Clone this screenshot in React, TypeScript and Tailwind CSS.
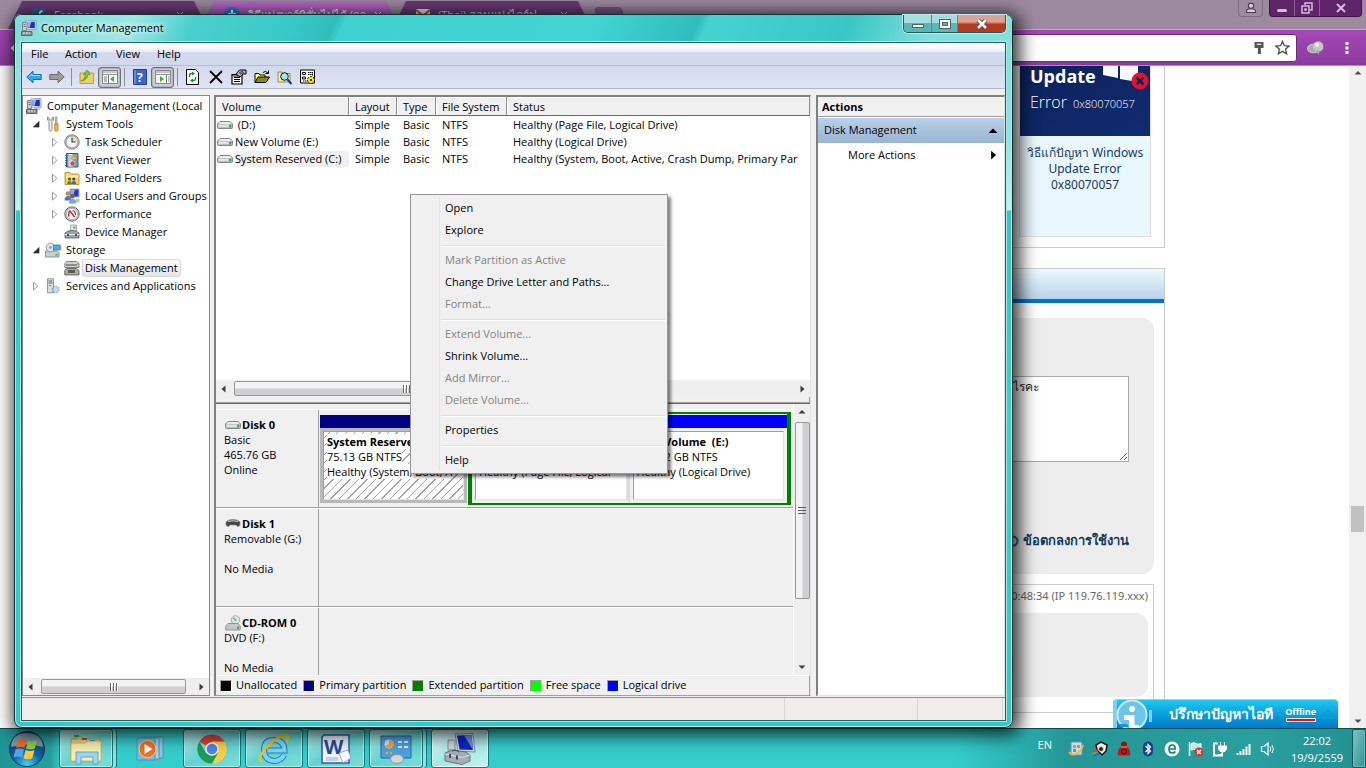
import React from "react";

// --- DATA ---
const TREE = [
  { label: "Computer Management (Local", icon: "computer", level: 0 },
  { label: "System Tools", icon: "tools", level: 1, state: "open" },
  { label: "Task Scheduler", icon: "clock", level: 2, state: "closed" },
  { label: "Event Viewer", icon: "event", level: 2, state: "closed" },
  { label: "Shared Folders", icon: "folder", level: 2, state: "closed" },
  { label: "Local Users and Groups", icon: "users", level: 2, state: "closed" },
  { label: "Performance", icon: "perf", level: 2, state: "closed" },
  { label: "Device Manager", icon: "device", level: 2 },
  { label: "Storage", icon: "storage", level: 1, state: "open" },
  { label: "Disk Management", icon: "disk", level: 2, selected: true },
  { label: "Services and Applications", icon: "services", level: 1, state: "closed" },
];

const INDENT = ["pl-[3px]", "pl-[6px]", "pl-[25px]"];

const VOLUMES = [
  { name: "\u00a0(D:)", status: "Healthy (Page File, Logical Drive)" },
  { name: "New Volume (E:)", status: "Healthy (Logical Drive)" },
  { name: "System Reserved (C:)", status: "Healthy (System, Boot, Active, Crash Dump, Primary Par", selected: true },
];

const LEGEND = [
  { label: "Unallocated", color: "bg-black" },
  { label: "Primary partition", color: "bg-[#000080]" },
  { label: "Extended partition", color: "bg-[#008000]" },
  { label: "Free space", color: "bg-[#00ff00]" },
  { label: "Logical drive", color: "bg-[#0000ff]" },
];

const CONTEXT_MENU = [
  [{ label: "Open" }, { label: "Explore" }],
  [{ label: "Mark Partition as Active", disabled: true }, { label: "Change Drive Letter and Paths..." }, { label: "Format...", disabled: true }],
  [
    { label: "Extend Volume...", disabled: true },
    { label: "Shrink Volume..." },
    { label: "Add Mirror...", disabled: true },
    { label: "Delete Volume...", disabled: true },
  ],
  [{ label: "Properties" }],
  [{ label: "Help" }],
];

// --- ICONS ---
const Svg: React.FC<{ children: React.ReactNode; className?: string; box?: string }> = ({ children, className = "size-4", box = "0 0 16 16" }) => (
  <svg viewBox={box} className={`${className} shrink-0`} fill="none" aria-hidden="true">
    {children}
  </svg>
);

const ComputerIcon = () => (
  <Svg>
    <path d="M1.5 2.5h4v8h-4z" fill="#c9cdd2" stroke="#7c838b" />
    <path d="M2.5 4.5h2M2.5 6.5h2" stroke="#6f767e" />
    <path d="M5 .8 15 .5v9.3L5.500 9z" fill="#dfe4e8" stroke="#8f979f" strokeWidth=".8" />
    <path d="M6.400 2 13.800 1.800v6.500L6.400 7.800z" fill="#1630c8" />
    <path d="M6.400 2h4l-2 5.800h-2z" fill="#8fb0f2" />
    <path d="M8 10h5l1.500 2H8z" fill="#bfc5ca" />
    <path d="M.500 11.500h10.500v4H.5z" fill="#8c9399" stroke="#60666c" />
    <path d="M2 13h2M5 13h2M8 13h1" stroke="#f0f2f3" />
  </Svg>
);

const HardDrive = ({ className = "size-4" }: { className?: string }) => (
  <Svg className={className}>
    <path d="M3 4.500h10l2.500 2.500v3.500q0 1-1 1h-13q-1 0-1-1V7z" fill="#b9bcc2" stroke="#85888e" />
    <path d="M3.200 5h9.600l2 2.200H1.200z" fill="#ececf0" />
    <path d="M1.500 8h10v2h-10z" fill="#e2e3e8" />
    <path d="M12.300 7.500h2v3h-2z" fill="#2db52a" />
  </Svg>
);

const TreeIcon: React.FC<{ name: string }> = ({ name }) => {
  switch (name) {
    case "computer":
      return <ComputerIcon />;
    case "tools":
      return (
        <Svg>
          <path d="M2.500 1v3l1.500 1.500v8q.1 1.700 1.500 1.700T7 13.500v-8L8.500 4V1L7 2v2H4V2z" fill="#eceff1" stroke="#70777d" strokeWidth=".8" />
          <path d="M10.500 1h1.500v7h-1.500z" fill="#c7ccd1" stroke="#71787e" strokeWidth=".6" />
          <path d="M9.700 8h3.300v6q-.2 1.300-1.600 1.300T9.700 14z" fill="#f7b92c" stroke="#a66d0a" strokeWidth=".7" />
        </Svg>
      );
    case "clock":
      return (
        <Svg>
          <circle cx="8" cy="8" r="7.200" fill="#b9c0c7" stroke="#666e76" strokeWidth=".8" />
          <circle cx="8" cy="8" r="5.600" fill="#f4f8fb" stroke="#8c949b" strokeWidth=".5" />
          <path d="M8 8V2.600A5.400 5.400 0 0 1 13.400 8z" fill="#f6d795" />
          <path d="M8 3.800V8h3.500" stroke="#27405d" strokeWidth="1.200" />
        </Svg>
      );
    case "event":
      return (
        <Svg>
          <path d="M2.500 1.500h11.500v13.500H2.500z" fill="#6f9fd4" stroke="#375c88" />
          <path d="M4.500 2v12.500h4V2z" fill="#dceaf6" />
          <path d="M5 4h3M5 6h3M5 8h2M5 12h2" stroke="#8fa9c4" />
          <path d="m10.200 2.300 3 4.900h-6z" fill="#ffd33a" stroke="#a9810c" strokeWidth=".5" />
          <path d="M10.200 4v1.500" stroke="#6b4e00" strokeWidth=".8" />
          <circle cx="8.500" cy="11.500" r="2.500" fill="#dc4733" stroke="#fff" strokeWidth=".5" />
          <path d="M1 3.500h2.500M1 6h2.500M1 8.500h2.500M1 11h2.500M1 13.500h2.500" stroke="#474d55" strokeWidth=".8" />
        </Svg>
      );
    case "folder":
      return (
        <Svg>
          <path d="M1 2.500h5l1.500 1.500H14q1 0 1 1v9.500H1z" fill="#f3d36b" stroke="#a98320" strokeWidth=".8" />
          <path d="M2 5.500h12v2H2z" fill="#fcefb4" />
          <circle cx="5.500" cy="9" r="1.600" fill="#7a5030" />
          <circle cx="9.800" cy="9" r="1.600" fill="#5a3d28" />
          <path d="M3 14q.2-3 2.500-3T8 14z" fill="#3d8f4a" />
          <path d="M7.500 14q.2-3 2.400-3t2.400 3z" fill="#3171b8" />
        </Svg>
      );
    case "users":
      return (
        <Svg>
          <path d="M6 1h9v8H6z" fill="#1c3ecf" stroke="#aeb7c0" />
          <path d="M6.500 1.500H11l-2 7H6.500z" fill="#8bacf0" />
          <circle cx="4" cy="5.500" r="2.300" fill="#b98b52" />
          <circle cx="8.500" cy="8" r="2.300" fill="#8b5b32" />
          <path d="M.5 12.500q0-4.500 3.500-4.500t3.500 4.500z" fill="#4b76bb" />
          <path d="M5 15.500q0-5 3.600-5t3.700 5z" fill="#70a7dc" />
          <path d="M12 10.500h3.500v4H12z" fill="#b8bfc6" />
        </Svg>
      );
    case "perf":
      return (
        <Svg>
          <circle cx="8" cy="8" r="7.200" fill="#c3c9cf" stroke="#555d65" strokeWidth=".9" />
          <circle cx="8" cy="8" r="5.500" fill="#fff" stroke="#878f97" strokeWidth=".5" />
          <path d="M4.800 10.500Q4.500 5 6 5l4.500 6" stroke="#d3232b" strokeWidth="1.500" />
          <path d="M8.500 4.500q3 .5 3 4.500" stroke="#d3232b" strokeWidth="1.200" />
        </Svg>
      );
    case "device":
      return (
        <Svg>
          <path d="M6.500 1h6v6h-6z" fill="#e4e7ea" stroke="#888f95" strokeWidth=".7" />
          <path d="M9.500 2.500h2v2h-2z" fill="#43ae46" />
          <path d="M1 9q2-2.500 7-2.500T15 9v5H1z" fill="#99a4ac" stroke="#555f67" strokeWidth=".8" />
          <path d="M1 10.500h14" stroke="#e3e8ec" />
          <path d="M3 10h2v2H3zM11 10h2v2h-2z" fill="#4a545c" />
        </Svg>
      );
    case "storage":
      return (
        <Svg>
          <path d="M.5 9h12l1.500 1.500V15H.5z" fill="#c8cdd2" stroke="#777f86" strokeWidth=".8" />
          <circle cx="5.500" cy="5.500" r="4.300" fill="#dfe4e8" stroke="#818a92" strokeWidth=".8" />
          <circle cx="5.500" cy="5.500" r="1.200" fill="#88929a" />
          <path d="M8.500 3h6.800v5H8.500z" fill="#4ab1dc" stroke="#256e94" strokeWidth=".7" />
          <path d="M10.500 12h2v1.500h-2z" fill="#2fb12d" />
        </Svg>
      );
    case "disk":
      return (
        <Svg>
          <path d="M3 1.500h9.500l2.500 2v4H.8v-4z" fill="#d0d1cb" stroke="#65665f" strokeWidth=".8" />
          <path d="M2 5h11" stroke="#494a45" />
          <path d="M2.500 8.500h10l2.500 2V15H.8v-4.500z" fill="#a9aaa4" stroke="#55564f" strokeWidth=".8" />
          <path d="M4 10h7v3H4z" fill="#5b5c57" />
          <path d="M12 4h1.500v1.500H12z" fill="#74ae33" />
        </Svg>
      );
    default:
      return (
        <Svg>
          <path d="M2.500 .8h6v14h-6z" fill="#d7dce0" stroke="#7b848c" strokeWidth=".8" />
          <path d="M3.500 3h4M3.500 5h4" stroke="#5f6870" />
          <path d="M4 7.500h2" stroke="#3cae3b" />
          <circle cx="10.500" cy="11.500" r="3" stroke="#87a8c8" strokeWidth="2" strokeDasharray="1.500 .8" />
          <circle cx="10.500" cy="11.500" r="2.200" fill="#c7d9ea" />
        </Svg>
      );
  }
};

const Expander: React.FC<{ state?: string }> = ({ state }) => (
  <span className="flex w-4 shrink-0 justify-center pr-0.5">
    {state === "closed" && (
      <Svg className="size-2.5" box="0 0 10 10">
        <path d="M2.500 1.200 6.800 5.200 2.500 9.200z" fill="#fff" stroke="#9a9a9a" />
      </Svg>
    )}
    {state === "open" && (
      <Svg className="size-2.5" box="0 0 10 10">
        <path d="M8 2.500V8H2.500z" fill="#333" stroke="#111" strokeWidth=".6" />
      </Svg>
    )}
  </span>
);

const Arrow: React.FC<{ dir: "left" | "right" | "up" | "down"; className?: string }> = ({ dir, className = "size-2" }) => {
  const paths = { left: "M5.500 .5v7l-4-3.500z", right: "M2.500 .5v7l4-3.500z", up: "M.5 5.500h7l-3.500-3.500z", down: "M.5 2.500h7l-3.500 3.500z" };
  return (
    <Svg className={className} box="0 0 8 8">
      <path d={paths[dir]} fill="currentColor" />
    </Svg>
  );
};

// --- SCROLLBARS ---
const HScroll: React.FC<{ children: React.ReactNode }> = ({ children }) => (
  <div className="flex h-[17px] shrink-0 items-center bg-[#efefef] px-1 text-[#3c3c3c]">
    <Arrow dir="left" />
    <div className="flex h-full flex-1 items-center px-1.5">{children}</div>
    <Arrow dir="right" />
  </div>
);

const HThumb = "flex h-[15px] items-center justify-center gap-px rounded-[2px] border border-[#979797] bg-linear-to-b from-[#f3f3f3] from-45% to-[#cfcfd1] to-55%";

const Grip = () => (
  <>
    <i className="h-2 w-0.5 border-r border-white bg-[#6b6b6b]" />
    <i className="h-2 w-0.5 border-r border-white bg-[#6b6b6b]" />
    <i className="h-2 w-0.5 border-r border-white bg-[#6b6b6b]" />
  </>
);

// --- BROWSER BEHIND THE WINDOW ---
const Tab: React.FC<{ title: string; active?: boolean; children: React.ReactNode }> = ({ title, active, children }) => (
  <div className={`-mr-2 flex h-7 w-[200px] shrink-0 items-center gap-2 px-6 text-[11px] [clip-path:polygon(7%_0,93%_0,100%_100%,0_100%)] ${active ? "bg-linear-to-b from-[#b56cc4] to-[#a245b8] text-white" : "bg-[#6c3a76] text-[#e3d3e6]"}`}>
    {children}
    <span className="flex-1 whitespace-nowrap">{title}</span>
    <Svg className="size-2" box="0 0 8 8">
      <path d="m1 1 6 6M7 1 1 7" stroke="currentColor" />
    </Svg>
  </div>
);

const Browser = () => (
  <div className="flex min-h-0 flex-1 flex-col bg-white">
    <div className="flex h-[29px] shrink-0 items-start justify-between bg-[#9d8a9f]">
      <div className="ml-2 flex pt-px">
        <Tab title="Facebook">
          <Svg className="size-3.5">
            <path d="M0 0h16v16H0z" fill="#3b5998" />
            <path d="M9 15V5.500q0-2 3-2M6.500 8H12" stroke="#fff" strokeWidth="2" />
          </Svg>
        </Tab>
        <Tab title="วิธีแบ่งพาร์ทิชั่นไม่ได้ (ถา" active>
          <Svg>
            <circle cx="8" cy="8" r="8" fill="#1787d8" />
            <path d="M8 3v10M4 7h8" stroke="#fff" strokeWidth="2" />
          </Svg>
        </Tab>
        <Tab title="(Thai) สอนแบ่งไดร์ฟ">
          <Svg className="size-3.5">
            <path d="M0 1h16v14H0z" fill="#e9e9e9" />
            <path d="m0 2 8 7 8-7" stroke="#d8402f" strokeWidth="2.500" />
          </Svg>
        </Tab>
        <span className="mt-1.5 ml-3 h-5 w-7 skew-x-12 rounded-sm bg-[#7d5486]" />
      </div>
      <div className="mr-1 flex items-start text-[#d9c3de]">
        <button aria-label="Profile" className="mr-1.5 flex h-[17px] w-[25px] items-center justify-center rounded-b border border-t-0 border-[#7d6d80]">
          <Svg className="size-3">
            <circle cx="8" cy="5" r="3.500" fill="#d8cfda" stroke="#4c3c50" strokeWidth="1.500" />
            <path d="M2 14v-2q0-3 6-3t6 3v2z" fill="#d8cfda" stroke="#4c3c50" strokeWidth="1.500" />
          </Svg>
        </button>
        <div className="flex h-[17px] divide-x divide-[#8e5c97] overflow-hidden rounded-b border border-t-0 border-[#3c1645] bg-[#5f2469]">
          <button aria-label="Minimise browser" className="flex w-[25px] items-end justify-center pb-1">
            <i className="h-[3px] w-2.5 rounded-full bg-[#d5bbd9]" />
          </button>
          <button aria-label="Restore browser" className="flex w-[25px] items-center justify-center">
            <Svg className="size-3" box="0 0 12 12">
              <path d="M4 3V1h7v7H9M1 4h7v7H1zM4 7h1v1H4z" stroke="#d5bbd9" strokeWidth="1.500" />
            </Svg>
          </button>
          <button aria-label="Close browser" className="flex w-[41px] items-center justify-center">
            <Svg className="size-2.5" box="0 0 10 10">
              <path d="m1 1 8 8M9 1 1 9" stroke="#d5bbd9" strokeWidth="2" />
            </Svg>
          </button>
        </div>
      </div>
    </div>

    <div className="flex h-[37px] shrink-0 items-center border-t border-b border-t-[#c5a9ca] border-b-[#a593a8] bg-linear-to-b from-[#a548b8] to-[#8b3a9d] px-4 text-white">
      <button aria-label="Back" className="-ml-1.5 pr-3">
        <Svg>
          <path d="M15 8H2M8 2 2 8l6 6" stroke="#fff" strokeWidth="2" />
        </Svg>
      </button>
      <div className="flex h-7 flex-1 items-center gap-2.5 rounded-[3px] border border-[#6b2b79] bg-white px-1.5">
        <input aria-label="Address" className="h-5 min-w-0 flex-1 text-xs outline-none" />
        <Svg className="h-3.5 w-3">
          <path d="M2 0h12v8H2zM6.500 8h4v8h-4z" fill="#555" />
          <path d="M5 3h6" stroke="#fff" strokeWidth="1.500" />
        </Svg>
        <Svg className="size-[15px]">
          <path d="m8 1.500 2 4.600 5 .4-3.800 3.300 1.200 4.900L8 12.100l-4.400 2.600 1.200-4.900L1 6.500l5-.4z" stroke="#4d4d4d" strokeWidth="1.400" />
        </Svg>
      </div>
      <div className="flex items-center gap-5 pl-2.5">
        <Svg className="size-[17px]">
          <ellipse cx="6" cy="9" rx="5.500" ry="4" fill="#aaa" stroke="#ccc" />
          <circle cx="10.500" cy="7" r="5" fill="#c5c5c5" />
          <circle cx="9.500" cy="5.500" r="2" fill="#ebebeb" />
          <path d="M8 11h4l-1 4z" fill="#aaa" />
        </Svg>
        <Svg className="h-3.5 w-1.5" box="0 0 6 14">
          <path d="M1.500 1h3v3h-3zM1.500 5.500h3v3h-3zM1.500 10h3v3h-3z" fill="#fff" />
        </Svg>
      </div>
    </div>

    <div className="flex min-h-0 flex-1">
      <main className="min-w-0 flex-1 overflow-hidden font-['Noto_Sans',sans-serif] text-xs text-[#173a5e]">
        <div className="mx-auto w-[981px]">
          <section className="flex h-[182px] justify-end border-x border-b border-[#ccc] pr-[13px]">
            <article className="flex h-[171px] w-[132px] flex-col border border-t-0 border-[#ddd] bg-[#e9f7fe] text-center leading-4">
              <div className="relative h-[70px] bg-linear-to-br from-[#0c2158] to-[#102c72] pl-2.5 text-left font-['Open_Sans',sans-serif] text-white">
                <div className="h-5 text-lg leading-5 font-bold">Update</div>
                <div className="flex items-baseline gap-1.5 pt-1">
                  <span className="text-base font-light">Error</span>
                  <span className="text-[11px] font-light">0x80070057</span>
                </div>
                <Svg className="absolute top-0 right-0 h-6 w-12" box="0 0 48 24">
                  <path d="M1 0h15v12L1 9zM18 0h18v16l-18-3z" fill="#f6f9ff" />
                  <circle cx="38" cy="15" r="8.500" fill="#e8112d" />
                  <path d="m34.500 11.500 7 7M41.500 11.500l-7 7" stroke="#0c2158" strokeWidth="2.500" />
                </Svg>
              </div>
              <a href="#fix" className="px-1 pt-[9px]">
                วิธีแก้ปัญหา Windows Update Error 0x80070057
              </a>
            </article>
          </section>

          <section className="mt-[20px] h-[520px] border border-[#ccc]">
            <div className="h-[34px] border-b-4 border-[#0074d2] bg-linear-to-b from-[#ecfaff] to-[#bad3ea]" />
            <div className="mt-[15px] mr-2.5 flex h-[256px] flex-col items-end rounded-r-xl bg-[#ededed] pt-[58px] pr-[25px]">
              <textarea aria-label="Message" defaultValue="ไรคะ" className="h-[86px] w-[200px] shrink-0 border border-[#a9a9a9] bg-white pt-0.5 pl-[83px] text-xs text-[#222]" />
              <a href="#terms" className="mt-[70px] flex items-center gap-1 text-[13px] font-semibold text-[#123a60]">
                <Svg className="size-3">
                  <circle cx="8" cy="8" r="6" stroke="#2d7d92" strokeWidth="3" />
                </Svg>
                ข้อตกลงการใช้งาน
              </a>
            </div>
            <div className="mt-2.5 mr-2.5 h-[129px] border-t border-r border-b border-[#ccc] pr-[5px] text-right text-[#666]">
              <p className="h-7 pt-1 text-[11px]">10:48:34 (IP 119.76.119.xxx)</p>
              <div className="h-[84px] rounded-r-xl bg-[#ededed]" />
            </div>
          </section>
        </div>
      </main>
      <div className="flex w-[17px] shrink-0 flex-col items-center bg-[#f0f0f0] py-[3px] text-[#505050]">
        <Arrow dir="up" />
        <div className="mt-auto mb-[185px] h-[26px] w-[13px] bg-[#c1c1c1]" />
        <Arrow dir="down" />
      </div>
    </div>
  </div>
);

const ChatWidget = () => (
  <button className="absolute right-7 bottom-10 flex h-[29px] w-[225px] items-center overflow-hidden rounded-t border-t border-[#7fdcf2] bg-linear-to-b from-[#20c8ee] to-[#0079c9] text-white">
    <Svg className="h-[29px] w-10" box="0 0 40 29">
      <path d="M0 0h4v29H0z" fill="#7fd0ee" />
      <circle cx="19" cy="15" r="14.500" fill="#6cc4e8" stroke="#c4ebf8" strokeWidth="2" />
      <circle cx="19" cy="9" r="3" fill="#fff" />
      <path d="M11 15h10.500v10H26v4H16v-9h-5z" fill="#fff" />
      <path d="M6 24h8l2 3H8z" fill="#1796d4" />
      <path d="M36 10v12h3V10z" fill="#7fd0ee" />
    </Svg>
    <span className="flex-1 pl-4 text-center text-sm font-bold whitespace-nowrap">ปรึกษาปัญหาไอที</span>
    <span className="mr-1.5 ml-3 flex flex-col items-center text-[9px] leading-3 font-bold">
      Offline
      <i className="h-1 w-[30px] border border-white bg-[#e8141c]" />
    </span>
    <Svg className="mr-1 h-3 w-3">
      <path d="m8 3 6 11H2z" stroke="#0aa0c8" strokeWidth="2" />
    </Svg>
  </button>
);

// --- COMPUTER MANAGEMENT WINDOW ---
const TitleBar = () => (
  <header className="flex h-7 shrink-0 items-start rounded-t-md bg-[linear-gradient(115deg,#7edcd9,#9be8e4_12%,#4bcfcd_18%,#37c9c7_28%,#2fbdbc_32%,#3fd2d0_33%,#41d4d2_58%,#2fbdbc_68%,#45d3d1_69%,#38c7c5_83%,#85e0dd_92%)] pr-1.5">
    <div className="flex h-full items-center gap-1 pb-0.5 pl-1.5 text-[11px] [text-shadow:0_0_6px_#fff,0_0_6px_#fff]">
      <ComputerIcon />
      <h1>Computer Management</h1>
    </div>
    <div className="ml-auto flex h-[18px] overflow-hidden rounded-b-[5px] border border-t-0 border-[#24595c] shadow-[0_0_0_1px_#b8efed]">
      <button aria-label="Minimise" className="flex w-7 items-center justify-center border-r border-[#4e8f91] bg-linear-to-b from-[#a4dddb] from-45% to-[#59b8b6] to-50% pt-1">
        <i className="h-1 w-3 border border-[#53636b] bg-white" />
      </button>
      <button aria-label="Maximise" className="flex w-[26px] items-center justify-center border-r border-[#4e8f91] bg-linear-to-b from-[#a4dddb] from-45% to-[#59b8b6] to-50%">
        <Svg className="h-2.5 w-3" box="0 0 12 10">
          <path d="M2 2h8v6H2z" stroke="#53636b" strokeWidth="4" />
          <path d="M2 2h8v6H2z" stroke="#fff" strokeWidth="2" />
        </Svg>
      </button>
      <button aria-label="Close" className="flex w-[47px] items-center justify-center bg-linear-to-b from-[#dda295] from-40% to-[#b43a20] to-55%">
        <Svg className="h-2.5 w-3" box="0 0 12 10">
          <path d="m2 1 8 8M10 1 2 9" stroke="#5b4b50" strokeWidth="4.500" />
          <path d="m2 1 8 8M10 1 2 9" stroke="#fff" strokeWidth="2.500" />
        </Svg>
      </button>
    </div>
  </header>
);

const TOOL = "flex h-[21px] w-[23px] shrink-0 items-center justify-center";
const TOOL_ON = "flex h-[21px] w-[23px] shrink-0 items-center justify-center rounded-[3px] border border-[#6c7078] bg-[#cdd0da] shadow-[inset_0_0_2px_#777]";

const ConsoleIcon: React.FC<{ right?: boolean }> = ({ right }) => (
  <Svg>
    <path d="M.5 1.500h15v13H.5z" fill="#f7f7f4" stroke="#85888b" />
    <path d="M1 3h14M1 5.500h14" stroke="#8e9499" />
    <path d={right ? "M11.500 6v8M13 8h1.500M13 10h1.500M13 12h1.500" : "M6.500 6v8M2 8h3M2 10h3M2 12h3"} stroke="#777e84" />
    <path d={right ? "m5 7 4 3-4 3z" : "m12 7-4 3 4 3z"} fill="#43ac2d" />
  </Svg>
);

const Toolbar = () => (
  <div className="flex h-[23px] shrink-0 items-center border-b border-[#b3b8c5] bg-linear-to-b from-[#d3d9ec] to-[#dfe5f4]">
    <button aria-label="Back" className={TOOL}>
      <Svg>
        <path d="M.8 8 7 2.200v3.300h8.200v5H7v3.300z" fill="#37a9e8" stroke="#1b6da3" />
        <path d="M3 7.500 6 5v1.500h8" stroke="#9fdcfb" />
      </Svg>
    </button>
    <button aria-label="Forward" className={TOOL}>
      <Svg>
        <path d="M15.200 8 9 2.200v3.300H.8v5H9v3.300z" fill="#9b9b9b" stroke="#6a6a6a" />
      </Svg>
    </button>
    <i className="mx-[3px] h-[18px] w-px bg-[#8a8f9b]" />
    <button aria-label="Up one level" className={TOOL}>
      <Svg>
        <path d="M1 4h5l1-1.500h3V4h4.500v10.500H1z" fill="#f2cf6d" stroke="#b98d2d" strokeWidth=".8" />
        <path d="M2 12q3.500-1 4.500-7L4.500 5.500 8 1l3 4.500H9Q8 11.500 2 12z" fill="#7ac943" stroke="#3a8a1d" strokeWidth=".6" />
      </Svg>
    </button>
    <button aria-label="Show console tree" className={TOOL_ON}>
      <ConsoleIcon />
    </button>
    <i className="mx-[3px] h-[18px] w-px bg-[#8a8f9b]" />
    <button aria-label="Help topics" className={TOOL}>
      <Svg>
        <path d="M1.500 .5h13v15h-13z" fill="#3a63ce" stroke="#24419a" />
        <path d="M3 1v14" stroke="#8eabec" />
        <text x="5" y="12.500" fill="#fff" fontSize="12" fontWeight="bold">?</text>
      </Svg>
    </button>
    <button aria-label="Show action pane" className={TOOL_ON}>
      <ConsoleIcon right />
    </button>
    <i className="mx-[3px] h-[18px] w-px bg-[#8a8f9b]" />
    <button aria-label="Refresh" className={TOOL}>
      <Svg>
        <path d="M1.500 .5h9l3 3v12h-12z" fill="#fff" stroke="#000" />
        <path d="M4.500 8V6q0-1.500 2-1.500h1M10.500 8v2q0 1.500-2 1.500h-1" stroke="#0b8a3a" strokeWidth="1.300" />
        <path d="m7 2.500 3 2-3 2zM8 9.500l-3 2 3 2z" fill="#0b8a3a" />
      </Svg>
    </button>
    <button aria-label="Delete" className={TOOL}>
      <Svg>
        <path d="m2 2 12 12M14 2 2 14" stroke="#000" strokeWidth="1.800" />
      </Svg>
    </button>
    <button aria-label="Properties" className={TOOL}>
      <Svg>
        <path d="M1 5.500h10v9.500H1z" fill="#fff" stroke="#000" strokeWidth="1.200" />
        <path d="M3 8.500h6M3 10.500h6M3 12.500h6M2 7h8" stroke="#000" />
        <path d="M5 5 8.500 1H15v4h-3L9 8z" fill="#b5b5b5" stroke="#000" />
        <path d="m8 4 4-2M9 5l4-1.500" stroke="#000" strokeWidth=".7" />
      </Svg>
    </button>
    <button aria-label="Open" className={TOOL}>
      <Svg>
        <path d="M1 13.500V4.500h4l1 1.500h5v2" fill="#ffff7a" stroke="#000" />
        <path d="m1 13.500 3-5.500h11.500l-3.500 5.500z" fill="#8a8a00" stroke="#000" />
        <path d="M9 3.500q2.500-2.500 5 .5M14.500 1.500v3h-3" stroke="#000" />
      </Svg>
    </button>
    <button aria-label="Find" className={TOOL}>
      <Svg>
        <path d="M1 13V3h4l1 1.500h7V13z" fill="#fff27d" stroke="#8a8a8a" />
        <circle cx="7.500" cy="7.500" r="3.800" fill="#9fe9f2" stroke="#111" />
        <path d="m10.500 10.500 4 4.500" stroke="#1030a8" strokeWidth="2" />
      </Svg>
    </button>
    <button aria-label="Settings" className={TOOL}>
      <Svg>
        <path d="M.5 1h14v13H.5z" fill="#fff" stroke="#000" />
        <path d="M2.500 3.500h3v2h-3zM2.500 8h3v2h-3z" stroke="#000" />
        <path d="M8 3.500h5M8 5.500h4M3 12h4M12.500 3v4" stroke="#000" strokeDasharray="1.500 .5" />
        <circle cx="11" cy="11" r="3.500" fill="#ffe600" stroke="#000" strokeDasharray="2 1" />
        <circle cx="11" cy="11" r="1" fill="#000" />
      </Svg>
    </button>
  </div>
);

const ConsoleTree = () => (
  <nav aria-label="Console tree" className="flex w-[188px] shrink-0 flex-col border border-[#828790] bg-white">
    <ul className="min-h-0 flex-1 overflow-hidden pt-px">
      {TREE.map((node) => (
        <li key={node.label} className={`flex h-[18px] items-center ${INDENT[node.level]}`}>
          {node.level > 0 && <Expander state={node.state} />}
          <TreeIcon name={node.icon} />
          <span className={`ml-0.5 rounded-[3px] border px-0.5 leading-4 whitespace-nowrap ${node.selected ? "border-[#d9d9d9] bg-linear-to-b from-[#fafafa] to-[#e5e5e5]" : "border-transparent"}`}>{node.label}</span>
        </li>
      ))}
    </ul>
    <HScroll>
      <div className={`${HThumb} w-[145px]`}>
        <Grip />
      </div>
    </HScroll>
  </nav>
);

const TH = "border-r border-[#8c8c8c] pt-0.5 pl-[6px] text-left leading-4 font-normal shadow-[inset_1px_1px_0_#fff]";

const VolumeList = () => (
  <div className="flex h-[300px] shrink-0 flex-col overflow-hidden bg-white">
    <div className="min-h-0 flex-1 overflow-hidden">
      <table className="w-full table-fixed border-separate border-spacing-0 whitespace-nowrap">
        <thead>
          <tr className="h-[19px] bg-[#f0f0f0] [&>th]:border-b [&>th]:border-b-[#696969]">
            <th className={`${TH} w-[133px]`}>Volume</th>
            <th className={`${TH} w-[48px]`}>Layout</th>
            <th className={`${TH} w-[39px]`}>Type</th>
            <th className={`${TH} w-[71px]`}>File System</th>
            <th className={TH}>Status</th>
          </tr>
        </thead>
        <tbody>
          {VOLUMES.map((volume) => (
            <tr key={volume.name} className="h-[17px] leading-4 [&>td]:p-0 [&>td]:pl-[6px]">
              <td className="pl-px!">
                <div className="flex items-center gap-px">
                  <HardDrive />
                  <span className={`flex-1 pl-px ${volume.selected ? "bg-[#f0f0f0]" : ""}`}>{volume.name}</span>
                </div>
              </td>
              <td>Simple</td>
              <td>Basic</td>
              <td>NTFS</td>
              <td>{volume.status}</td>
            </tr>
          ))}
        </tbody>
      </table>
    </div>
    <HScroll>
      <div className={`${HThumb} w-[346px]`}>
        <Grip />
      </div>
    </HScroll>
  </div>
);

const DiskRow: React.FC<{ name: string; lines: string[]; icon: React.ReactNode; children?: React.ReactNode }> = ({ name, lines, icon, children }) => (
  <div className="flex h-[99px] shrink-0 border-t border-b border-t-white border-b-[#a0a0a0]">
    <div className="w-[103px] shrink-0 border-r border-[#a0a0a0] pt-[7px] pl-2 leading-[15px]">
      <div className="flex h-[15px] items-center font-bold">
        {icon}
        {name}
      </div>
      {lines.map((line, index) => (
        <div key={index} className="h-[15px]">
          {line}
        </div>
      ))}
    </div>
    <div className="flex flex-1 items-start gap-px pt-0.5 pl-px">{children}</div>
  </div>
);

const Partition: React.FC<{ bar: string; body: string; title: string; size: string; status: string }> = ({ bar, body, title, size, status }) => (
  <div className="flex h-[89px] min-w-0 flex-1 flex-col pt-px">
    <div className={`h-[13px] ${bar}`} />
    <div className={`min-h-0 flex-1 border-3 ${body}`}>
      <div className="flex h-full flex-col items-start overflow-hidden border border-[#a0a0a0] border-r-[#e3e3e3] border-b-[#e3e3e3] pt-0.5 pl-[3px] leading-[15px] whitespace-pre">
        <div className="bg-white font-bold">{title}</div>
        <div className="bg-white">{size}</div>
        <div className="bg-white">{status}</div>
      </div>
    </div>
  </div>
);

const DiskView = () => (
  <div className="flex min-h-0 flex-1">
    <div className="flex min-w-0 flex-1 flex-col overflow-hidden pt-[5px]">
      <DiskRow name="Disk 0" lines={["Basic", "465.76 GB", "Online"]} icon={<HardDrive className="h-4 w-[18px]" />}>
        <div className="flex w-[147px] shrink-0 pt-0.5">
          <Partition
            bar="bg-[#000080]"
            body="border-[#b9b9b9] bg-[repeating-linear-gradient(135deg,#fff_0_5px,#a3a3a3_5px_6px)]"
            title="System Reserved  (C:)"
            size="75.13 GB NTFS"
            status="Healthy (System, Boot, A"
          />
        </div>
        <div className="flex w-[323px] shrink-0 border-x-4 border-y-2 border-[#008000]">
          <Partition bar="bg-[#0000ff]" body="border-[#f0f0f0] border-r-[#dcdcdc] bg-white" title="(D:)" size="195.31 GB NTFS" status="Healthy (Page File, Logical" />
          <Partition bar="bg-[#0000ff]" body="border-[#f0f0f0] bg-white" title="New Volume  (E:)" size="195.32 GB NTFS" status="Healthy (Logical Drive)" />
        </div>
      </DiskRow>
      <DiskRow
        name="Disk 1"
        lines={["Removable (G:)", "", "No Media"]}
        icon={
          <Svg className="h-4 w-[18px]">
            <path d="M1 6q2-2.500 7-2.500T15 6v3.500q-3 2-4-.5H5q-1 2.500-4 .5z" fill="#444" stroke="#8b8b8b" strokeWidth=".8" />
            <path d="M3 5.500q5-1.500 10 0" stroke="#d5d5d5" />
          </Svg>
        }
      />
      <DiskRow
        name="CD-ROM 0"
        lines={["DVD (F:)", "", "No Media"]}
        icon={
          <Svg className="h-4 w-[18px]">
            <circle cx="10.500" cy="5" r="4.300" fill="#dfe3e6" stroke="#969ca1" strokeWidth=".8" />
            <circle cx="10.500" cy="5" r="1" fill="#8c9399" />
            <path d="m8 3 2 1.500" stroke="#55c75a" strokeWidth="1.500" />
            <path d="M.8 11 3 8.500h10l2.200 2.500v4H.8z" fill="#c3c6cb" stroke="#7d8186" strokeWidth=".8" />
            <path d="M12 11.500h2v2.500h-2z" fill="#2db52a" />
          </Svg>
        }
      />
    </div>
    <div className="flex w-[17px] shrink-0 flex-col items-center border-l border-white bg-[#efefef] py-1 text-[#3c3c3c]">
      <Arrow dir="up" />
      <div className="mt-1.5 flex h-[177px] w-[15px] flex-col items-center justify-center gap-0.5 rounded-[2px] border border-[#979797] bg-linear-to-r from-[#f3f3f3] from-45% to-[#cfcfd1] to-55%">
        <i className="h-px w-2 bg-[#5c5c5c]" />
        <i className="h-px w-2 bg-[#5c5c5c]" />
        <i className="h-px w-2 bg-[#5c5c5c]" />
      </div>
      <Arrow dir="down" className="mt-auto size-2" />
    </div>
  </div>
);

const ActionsPane = () => (
  <aside className="flex w-[189px] shrink-0 flex-col border-t-2 border-r border-b border-l-2 border-t-[#808080] border-r-[#e3e3e3] border-b-[#e3e3e3] border-l-[#808080] bg-white">
    <h2 className="h-5 border-b border-[#a0a0a0] bg-[#f0f0f0] pt-0.5 pl-1 font-bold">Actions</h2>
    <button className="mt-px flex h-[25px] items-center justify-between bg-linear-to-b from-[#b9d1ea] to-[#98b4d2] px-1.5">
      Disk Management
      <Arrow dir="up" className="size-2.5" />
    </button>
    <button className="flex h-6 items-center justify-between pr-1.5 pl-[30px]">
      More Actions
      <Arrow dir="right" className="size-2.5" />
    </button>
  </aside>
);

const ContextMenu = () => (
  <div role="menu" className="absolute top-[180px] left-[396px] w-[258px] border border-[#979797] bg-[#f0f0f0] p-0.5 shadow-[3px_3px_3px_rgba(0,0,0,0.5)]">
    <div className="ml-[26px] border-l border-[#e2e3e3]">
      {CONTEXT_MENU.map((group, index) => (
        <div key={index} className="ml-px">
          {index > 0 && <div className="flex h-2 items-center pt-px"><i className="h-0.5 w-full border-t border-b border-t-[#e0e0e0] border-b-white" /></div>}
          {group.map((item) => (
            <button key={item.label} role="menuitem" disabled={item.disabled} className="block h-[22px] w-full pl-1 text-left disabled:text-[#838383]">
              {item.label}
            </button>
          ))}
        </div>
      ))}
    </div>
  </div>
);

const ManagementWindow = () => (
  <div className="absolute top-3.5 right-[353px] bottom-10 left-3.5 flex flex-col rounded-lg bg-[linear-gradient(180deg,#84dedb_0,#8fe3e0_120px,#c5f1ef_196px,#35c6c5_197px,#3dd0cf_60%,#35c6c5)] font-['Open_Sans',sans-serif] text-[11px] text-black shadow-[inset_0_0_0_1px_#0d3033,inset_0_0_0_2px_#a8eeec,3px_3px_18px_4px_rgba(0,0,0,0.8)]">
    <div className="m-px flex min-h-0 flex-1 flex-col">
      <TitleBar />
      <div className="mx-1.5 -mt-px mb-1.5 flex min-h-0 flex-1 flex-col border border-[#225f62] bg-[#f0f0f0] outline outline-[#a6ebe9]">
        <div className="flex h-[23px] shrink-0 items-center border-b border-[#b6bccc] bg-linear-to-b from-white from-10% via-[#e7ebf6] via-40% to-[#d3d9ec] to-45% pl-[9px]">
          <button className="w-[34px] text-left">File</button>
          <button className="w-[51px] text-left">Action</button>
          <button className="w-[41px] text-left">View</button>
          <button>Help</button>
        </div>
        <Toolbar />
        <div className="mt-1.5 flex min-h-0 flex-1 gap-1">
          <ConsoleTree />
          <section className="mr-px flex min-w-0 flex-1 flex-col border-t-2 border-r border-b border-l-2 border-t-[#808080] border-r-[#e3e3e3] border-b-[#a0a0a0] border-l-[#808080] bg-[#f0f0f0]">
            <VolumeList />
            <div className="h-[7px] shrink-0 border-b border-[#696969]">
              <div className="h-1.5 border-r border-b border-[#a0a0a0]" />
            </div>
            <DiskView />
            <div className="flex h-5 shrink-0 items-center gap-1 border-t border-r border-t-white border-r-[#a0a0a0] pl-1">
              {LEGEND.map((item) => (
                <span key={item.label} className="flex items-center gap-1 pr-0.5">
                  <i className={`size-3 border border-r-white border-b-white border-t-[#a0a0a0] border-l-[#a0a0a0] ${item.color}`} />
                  {item.label}
                </span>
              ))}
            </div>
          </section>
          <ActionsPane />
        </div>
        <footer className="mt-px flex h-[23px] shrink-0 border-t border-[#8d8d8d] bg-[#f0eceb]">
          <span className="flex-1 border-r border-[#d8d4d3]" />
          <span className="w-[133px] border-r border-[#d8d4d3]" />
          <span className="mr-0.5 w-[85px] border-r border-[#d8d4d3]" />
        </footer>
      </div>
    </div>
    <ContextMenu />
  </div>
);

// --- TASKBAR ---
const TASK = "flex h-[39px] w-[58px] items-center justify-center";
const TASK_ON = "flex h-[39px] w-[58px] items-center justify-center rounded-[3px] border border-[#17777a] bg-linear-to-br from-[#b5eeec] via-[#62d3d1] to-[#7bdcda] shadow-[inset_0_0_0_1px_#b0efee]";
const TASK_STACK = "flex h-[39px] w-[54px] mr-1 items-center justify-center rounded-[3px] border border-[#17777a] bg-linear-to-br from-[#b5eeec] via-[#62d3d1] to-[#7bdcda] shadow-[inset_0_0_0_1px_#b0efee,3px_0_0_#8fe2e0,4px_0_0_#17777a]";

const Taskbar = () => (
  <footer className="flex h-10 shrink-0 items-center border-t border-[#0c4b4e] bg-[linear-gradient(90deg,#1f9494_0,#279d9d_50px,#35cccc_62px,#35cccc_70%,#2cb4b4_74%,#259696_78%,#2a9f9f_92%,#229090)] font-['Open_Sans',sans-serif] text-[11px] text-white">
    <button aria-label="Start" className="mx-2 shrink-0">
      <Svg className="size-[38px]" box="0 0 38 38">
        <defs>
          <radialGradient id="orb" cx=".5" cy=".95" r=".9">
            <stop offset="0" stopColor="#3fd4f5" />
            <stop offset=".45" stopColor="#1263a6" />
            <stop offset="1" stopColor="#12334f" />
          </radialGradient>
        </defs>
        <circle cx="19" cy="19" r="17.500" fill="url(#orb)" stroke="#0e3a50" />
        <path d="M3 17Q4 3 19 3t16 14q-16-5-32 0z" fill="#c5d8e2" opacity=".55" />
        <path d="M10 9.500q4.500-2.200 8.500 0l-2 8.300q-4.200-1.800-8.400 0z" fill="#ef6b2a" />
        <path d="M20 10.300q4.300 2 9-.2L26.900 18.400q-4.500 1.800-8.900 0z" fill="#95c93d" />
        <path d="M7.600 19.300q4.200-1.800 8.400 0l-2 8.200q-4.200-2-8.500 0z" fill="#4fa8e6" />
        <path d="M17.500 19.900q4.300 2 9 0l-2.200 8.400q-4.400 2-8.800 0z" fill="#fdc93c" />
      </Svg>
    </button>
    <div className="ml-[5px] flex gap-1">
      <button aria-label="File Explorer" className={TASK_STACK}>
        <Svg className="size-8" box="0 0 32 32">
          <path d="M1 6h5l1-2h5v4H1z" fill="#f6eeb6" stroke="#a58f42" strokeWidth=".7" />
          <path d="M1 6h29v22H1z" fill="#efdc82" stroke="#b0974a" strokeWidth=".8" />
          <path d="M4 3h5M12 6h5M20 8h5" stroke="#27a539" strokeWidth="2" />
          <path d="M12 6h5" stroke="#d1452d" strokeWidth="2" />
          <path d="M20 8h5" stroke="#2488cf" strokeWidth="2" />
          <path d="M1 10h14l2-2h14v20H1z" fill="#f8efb2" stroke="#c4a954" strokeWidth=".7" />
          <path d="M6 31V19h22v12h-5v-7H11v7z" fill="#9dd6f0" stroke="#5fa8cb" />
        </Svg>
      </button>
      <button aria-label="Media Player" className={TASK}>
        <Svg className="size-7" box="0 0 28 28">
          <path d="M9 2h18v21H9z" fill="#8fc8e3" stroke="#4b94b8" />
          <path d="M5 3h18v21H5z" fill="#a5d5eb" stroke="#4b94b8" />
          <path d="M1 3h18v22H1z" fill="#77bbdd" stroke="#4b94b8" />
          <circle cx="11.500" cy="14" r="8.500" fill="#f1701f" stroke="#fbc79c" />
          <path d="m8.500 9 8 5-8 5z" fill="#fff" />
        </Svg>
      </button>
      <button aria-label="Chrome" className={TASK_ON}>
        <Svg className="size-[30px]" box="0 0 30 30">
          <path d="M15 15 2.400 7.700A14.500 14.500 0 0 1 27.600 7.700H15z" fill="#dc4437" />
          <path d="M27.600 7.700A14.500 14.500 0 0 1 15 29.500l6.300-10.900L15 7.700z" fill="#fcce42" />
          <path d="M2.400 7.700A14.500 14.500 0 0 0 15 29.500l6.300-10.900L8.700 18.600z" fill="#189d58" />
          <circle cx="15" cy="15" r="6.800" fill="#f5f5f5" />
          <circle cx="15" cy="15" r="5.300" fill="#4a86f0" />
        </Svg>
      </button>
      <button aria-label="Internet Explorer" className={TASK_ON}>
        <Svg className="size-8" box="0 0 32 32">
          <path d="M26 22q-3 6-10 6Q6 27 6 17T16 7q10 0 10.500 10.500H10" stroke="#1c7ec0" strokeWidth="6" />
          <path d="M26 22q-3 6-10 6Q6 27 6 17T16 7q10 0 10.500 10.500H10" stroke="#7fd3f6" strokeWidth="4" />
          <path d="M4 29q-6-3 4-14T27 2q5 1 1 7" stroke="#f5c518" strokeWidth="2.500" />
        </Svg>
      </button>
      <button aria-label="Word" className={TASK_ON}>
        <Svg className="size-8" box="0 0 32 32">
          <path d="M4 2h25v28H2V4z" fill="#f1f6fc" stroke="#2b5ba8" strokeWidth="1.500" />
          <text x="4" y="21" fill="#1e4c9a" fontSize="20" fontWeight="bold">W</text>
          <path d="M6 25h12M6 27h12" stroke="#88a9d6" />
          <path d="m19 20 9-3 3 8-8 5z" fill="#fff" stroke="#7f9dc7" strokeWidth=".8" />
        </Svg>
      </button>
      <button aria-label="Control Panel" className={TASK_STACK}>
        <Svg className="size-8" box="0 0 32 32">
          <path d="M1 3h30v22H1z" fill="#4ea0dc" stroke="#266a9d" />
          <circle cx="9" cy="11" r="4.500" fill="#d3e8f6" />
          <path d="M9 11V6.500a4.500 4.500 0 1 1-4 6.500z" fill="#f6a53a" />
          <path d="M18 9h4M24 9h4M18 14h4M24 14h4" stroke="#d8f2ff" strokeWidth="2" />
          <circle cx="7" cy="20" r="1.200" fill="#f6a53a" />
          <circle cx="11" cy="20" r="1.200" fill="#f6a53a" />
          <ellipse cx="17" cy="26" rx="6.500" ry="4.500" fill="#d3d7da" stroke="#858c92" strokeWidth=".8" />
        </Svg>
      </button>
      <button aria-label="Computer Management" className="flex h-[39px] w-[58px] items-center justify-center rounded-[3px] border border-[#17777a] bg-linear-to-br from-[#e3f9f8] via-[#a5e8e6] to-[#c3f2f1] shadow-[inset_0_0_0_1px_#eafcfb]">
        <Svg className="size-8" box="0 0 32 32">
          <path d="M4 7h7v10H4z" fill="#cfd5d9" stroke="#78818a" strokeWidth=".8" />
          <path d="m11 1 18-.5L31 19l-17-1z" fill="#d9dee2" stroke="#737c85" strokeWidth=".8" />
          <path d="m13 2.500 14.500-.5L29 17l-13.500-.5z" fill="#0d24c4" />
          <path d="m20 2.300 7.500-.3L29 17z" fill="#6b8df0" />
          <path d="m1 20 7-3 14 2 4 3v6l-8 3.500L1 28z" fill="#a4adb5" stroke="#58626b" strokeWidth=".8" />
          <path d="m1 21 17 3.500 8-2.500" stroke="#dde2e6" />
          <path d="M6 21v4M13 22.500v4" stroke="#434c55" strokeWidth="2" />
          <path d="M8 18.500q3-3 7 .5" stroke="#434c55" />
        </Svg>
      </button>
    </div>
    <div className="ml-auto flex h-full items-center gap-2 pl-2">
      <span className="mr-2 pb-1.5">EN</span>
      <Svg>
        <path d="M3 1h11v13H3z" fill="#c3dff0" stroke="#5c92b5" />
        <path d="M5 4h3v3H5z" fill="#ef8a3d" />
        <path d="M9 4h3v3H9z" fill="#76b843" />
        <path d="M5 8h3v3H5z" fill="#4a9be0" />
        <path d="M1 11q4 6 12-2l2-5" stroke="#f6b338" strokeWidth="2" />
      </Svg>
      <Svg>
        <path d="m4 4 5-3 6 3-1 6-4 4-5-5z" fill="#f2f2f2" stroke="#111" strokeWidth="1.500" />
        <circle cx="9" cy="8" r="2.500" fill="#222" stroke="#ddd" />
        <path d="m0 11 5-2" stroke="#ef3b3b" strokeWidth="1.700" />
        <path d="m0 13 6-2" stroke="#2cc94a" strokeWidth="1.700" />
        <path d="m1 15 6-2.500" stroke="#2a63f0" strokeWidth="1.700" />
      </Svg>
      <Svg>
        <circle cx="8" cy="3.500" r="3" fill="#8e1515" />
        <path d="M5 5.500h6q4 4 3 9H2q-1-5 3-9z" fill="#b31c1c" />
        <circle cx="8" cy="10.500" r="2.500" stroke="#400b0b" />
        <path d="M5 6h6" stroke="#f4a53c" />
      </Svg>
      <Svg>
        <rect x="3" y=".5" width="10" height="15" rx="5" fill="#14408a" />
        <path d="m5.500 5 5 5L8 12.500v-9L10.500 6l-5 5" stroke="#fff" strokeWidth="1.200" />
      </Svg>
      <Svg>
        <circle cx="8" cy="8" r="7.500" fill="#f3f7f7" />
        <path d="M11.300 10.500Q10.500 12 8.200 12 5 12 5 8t3.200-4q3 0 3 4H6" stroke="#247c7c" strokeWidth="1.700" />
      </Svg>
      <Svg>
        <path d="M1.500 1v14" stroke="#fff" strokeWidth="1.500" />
        <path d="M3 2.500q3-1.500 5 0t5 0V9q-3 1.500-5 0T3 9z" fill="#c6e5e4" stroke="#fff" />
        <circle cx="11" cy="11" r="4.500" fill="#dd352c" />
        <path d="m9 9 4 4M13 9l-4 4" stroke="#fff" strokeWidth="1.500" />
      </Svg>
      <Svg>
        <path d="M6 2.500H2v12h8V12" stroke="#fff" strokeWidth="2" />
        <path d="M8.500 1v4M12.500 1v4M6.500 5h8v3q-1 3-4 3t-4-3z" fill="#fff" stroke="#fff" />
        <path d="M10.500 11v2.500H6" stroke="#fff" />
      </Svg>
      <Svg>
        <path d="M1.500 14v-2M4.500 14v-4M7.500 14V8M10.500 14V5.500M13.500 14V3" stroke="#fff" strokeWidth="2" />
      </Svg>
      <Svg>
        <path d="M1.500 5.500H4L8 2v12l-4-3.500H1.500z" stroke="#fff" strokeWidth="1.200" />
        <path d="M10 5.500q1.500 2.500 0 5M12 4q2.800 4 0 8" stroke="#fff" />
      </Svg>
      <time className="ml-1.5 w-[54px] text-center leading-[17px]">
        22:02
        <br />
        19/9/2559
      </time>
      <button aria-label="Show desktop" className="h-[39px] w-3.5 rounded-[2px] border border-[#0f5a5c] bg-linear-to-br from-[#7cc4c3] to-[#2b9494] shadow-[inset_0_0_0_1px_#6dbcbb]" />
    </div>
  </footer>
);

const App = () => (
  <div className="relative flex h-screen flex-col overflow-hidden font-['Open_Sans','Noto_Sans',sans-serif]">
    <Browser />
    <ChatWidget />
    <ManagementWindow />
    <Taskbar />
  </div>
);

export default App;
